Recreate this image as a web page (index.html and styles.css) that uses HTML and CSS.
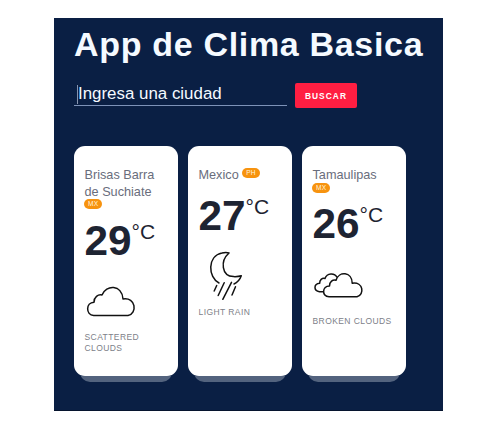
FILE: index.html
```html
<!DOCTYPE html>
<html lang="es">
<head>
<meta charset="utf-8">
<title>App de Clima Basica</title>
<link rel="stylesheet" href="styles.css">
</head>
<body>
<main class="app">
  <h1 class="title">App de Clima Basica</h1>
  <form class="search">
    <div class="field"><span class="caret"></span>Ingresa una ciudad</div>
    <button class="submit" type="button">BUSCAR</button>
  </form>
  <section class="cities">
    <article class="card">
      <h2 class="city">Brisas Barra de Suchiate <sup class="country country-below">MX</sup></h2>
      <div class="temp">29<sup class="unit">°C</sup></div>
      <svg class="icon" viewBox="0 0 50 50"><path d="M7.7 39.5C-.5 38.8-.3 26.5 8 26.2C8 21 12 18.2 16 19C20 8.3 36 8.3 37 23C50 20.8 51.5 37.5 42 39.5Z"/></svg>
      <p class="sky">SCATTERED CLOUDS</p>
    </article>
    <article class="card">
      <h2 class="city">Mexico <sup class="country">PH</sup></h2>
      <div class="temp">27<sup class="unit">°C</sup></div>
      <svg class="icon" viewBox="0 0 50 50"><path d="M19 32C8 26.5 7 5 22 2Q26 .9 29 2C20 10 21.5 25 33.5 25.6Q38 25.8 41.3 24.8Q39 31 34 33M16.7 34.5L14.2 40M24.2 31.8L18.2 44.5M31.5 31.3L22.8 48.3M35.5 35.8L32 44"/></svg>
      <p class="sky">LIGHT RAIN</p>
    </article>
    <article class="card">
      <h2 class="city">Tamaulipas <sup class="country country-below">MX</sup></h2>
      <div class="temp">26<sup class="unit">°C</sup></div>
      <svg class="icon" viewBox="0 0 50 50"><path d="M15 37.8C7.5 37.5 8 27 15.5 27C15.5 22.5 18.8 20.5 22 21.2C25 11.7 38 12.7 38.2 24.2C49.5 22.5 50.7 36 43 37.8ZM9.5 32.8H5.5C-.8 31.5-.3 24.7 5.7 24.2C5.5 21 8 18.7 11 19.4C13 13.8 20.5 13.5 23.2 18.5"/></svg>
      <p class="sky">BROKEN CLOUDS</p>
    </article>
  </section>
</main>
</body>
</html>
```
FILE: styles.css
```css
* { box-sizing: border-box; }
body {
  margin: 0;
  padding: 18px 54px 0;
  background: #fff;
  font-family: "Liberation Sans", Arial, sans-serif;
}
.app {
  width: 389px;
  height: 393px;
  padding: 6px 20px 0;
  background: #0a1f44;
  border-bottom: 1px solid #06142e;
}
.title {
  margin: 0;
  font-size: 34px;
  line-height: 40px;
  letter-spacing: .68px;
  white-space: nowrap;
  color: #f5faff;
}
.search {
  display: flex;
  gap: 8px;
  margin: 19px 0 0;
}
.field {
  display: flex;
  align-items: center;
  width: 213px;
  height: 23px;
  padding-left: 3px;
  border-bottom: 1px solid #7d92b8;
  font-size: 16.9px;
  white-space: nowrap;
  color: #f5faff;
}
.caret {
  width: 1px;
  height: 19px;
  background: #8795b0;
}
.submit {
  width: 62px;
  height: 25px;
  padding: 0;
  border: 0;
  border-radius: 2px;
  background: #ff1e42;
  color: #fff;
  font: bold 8.4px "Liberation Sans", Arial, sans-serif;
  letter-spacing: 1.05px;
}
.cities {
  display: grid;
  grid-template-columns: repeat(3, 103.5px);
  gap: 10.5px;
  margin-top: 37.5px;
}
.card {
  position: relative;
  height: 230.5px;
  padding: 21.5px 10.5px 0;
  border-radius: 11px;
  background: #fff;
}
.card::after {
  content: "";
  position: absolute;
  left: 6px;
  right: 5.5px;
  bottom: -6px;
  height: 17px;
  border-radius: 0 0 10px 10px;
  background: #53637e;
  clip-path: inset(11px 0 0);
}
.city {
  margin: 0;
  font-size: 12.7px;
  font-weight: 400;
  line-height: 16.5px;
  color: #696d7c;
}
.country {
  display: inline-block;
  height: 10px;
  padding: 0 4px;
  border-radius: 5px;
  background: #f7930f;
  color: #fff3dd;
  font-size: 6.6px;
  line-height: 10px;
  letter-spacing: .2px;
  vertical-align: 4px;
  margin-top: -4px;
}
.country-below {
  display: block;
  width: fit-content;
  margin: -1px 0 -.5px -.5px;
}
.temp {
  display: flex;
  margin-top: 8px;
  font-size: 42.3px;
  font-weight: 700;
  line-height: 48px;
  color: #1e2432;
}
.unit {
  margin-top: 3px;
  font-size: 21px;
  font-weight: 400;
  line-height: 24px;
}
.icon {
  display: block;
  width: 50px;
  height: 50px;
  margin: 11px 0 0 1px;
  fill: none;
  stroke: #111;
  stroke-width: 1.5;
  stroke-linecap: round;
  stroke-linejoin: round;
}
.sky {
  margin: 6.5px 0 0;
  font-size: 8.5px;
  line-height: 11px;
  letter-spacing: .42px;
  color: #7d8088;
}
```
